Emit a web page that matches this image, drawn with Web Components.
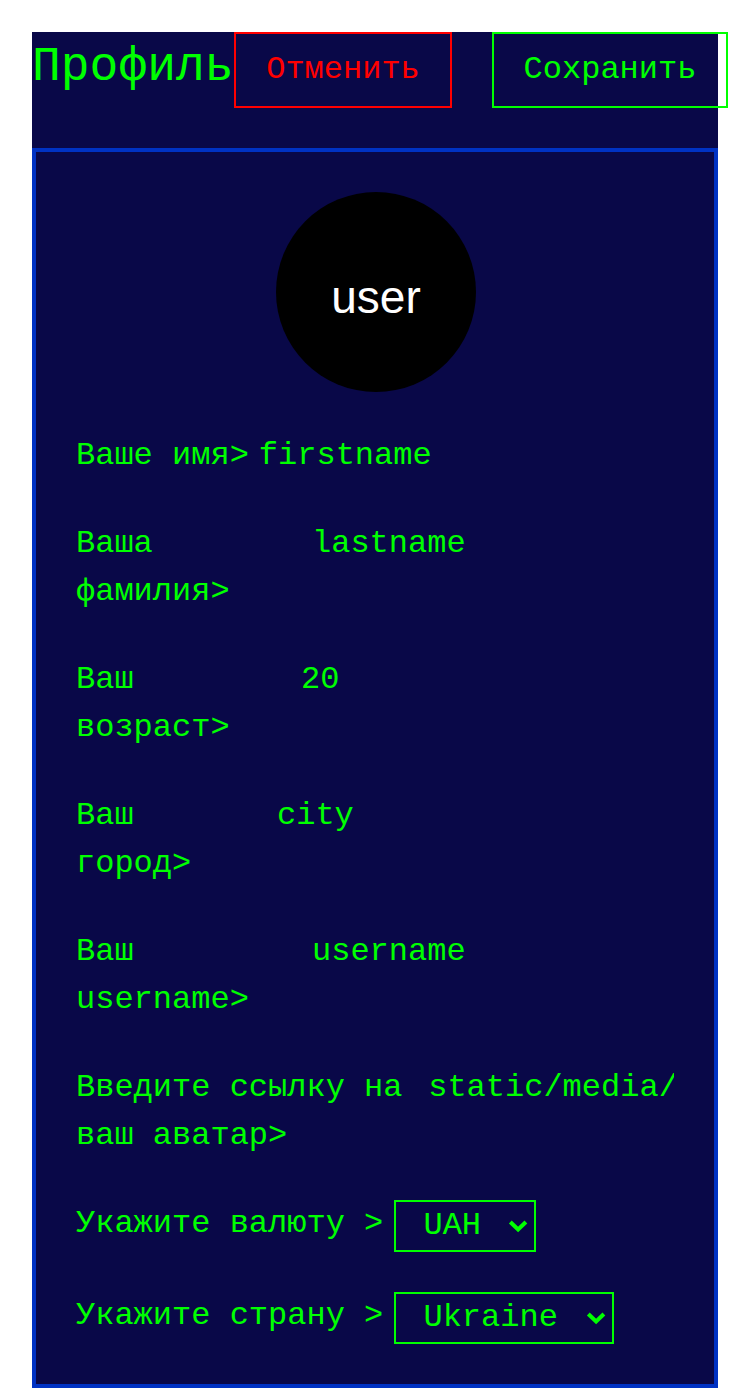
<!DOCTYPE html>
<html lang="ru">
<head>
<meta charset="utf-8">
<title>Профиль</title>
<style>
html, body { margin: 0; background: #fff; }
body { height: 1388px; overflow: hidden; }
</style>
</head>
<body>
<profile-page></profile-page>
<script>
const define = (name, html) => customElements.define(name, class extends HTMLElement {
  constructor() {
    super();
    const t = document.createElement('template');
    t.innerHTML = html;
    this.attachShadow({ mode: 'open' }).append(t.content.cloneNode(true));
  }
});

define('action-button', `
<style>
:host { display: block; flex: none; width: var(--width); color: var(--tone, #0f0); }
button { display: block; box-sizing: border-box; width: 100%; height: 76px; margin: 0; padding: 0; border: 2px solid currentColor; background: none; color: inherit; font: inherit; line-height: 72px; white-space: nowrap; }
</style>
<button><slot></slot></button>`);

define('user-avatar', `
<style>
:host { display: block; width: 200px; height: 200px; border-radius: 50%; background: #000; color: #fff; text-align: center; font: 46px/210px "Liberation Sans", Arial, sans-serif; overflow: hidden; }
</style>
<slot></slot>`);

define('profile-field', `
<style>
:host { display: flex; align-items: flex-start; }
.label { flex: none; width: var(--label, auto); margin-right: 10px; }
.value { flex: 1; min-width: 0; overflow: hidden; white-space: nowrap; }
</style>
<div class="label"><slot name="label"></slot></div>
<div class="value"><slot></slot></div>`);

define('select-box', `
<style>
:host { display: flex; align-items: center; box-sizing: border-box; width: var(--width); height: 52px; margin-left: .8px; padding: 0 6px 0 27.4px; border: 2px solid #0f0; justify-content: space-between; }
svg { display: block; flex: none; }
</style>
<span><slot></slot></span>
<svg width="20" height="14" viewBox="0 0 20 14"><path d="M2.3 3 10.1 10.5 17.9 3" fill="none" stroke="#0f0" stroke-width="4"/></svg>`);

define('profile-page', `
<style>
:host { display: block; box-sizing: border-box; width: 686px; height: 1356px; margin: 32px 0 0 32px; background: #090848; color: #0f0; font: 32px/48px "Liberation Mono", "Courier New", monospace; }
header { display: flex; align-items: flex-start; height: 116px; }
h1 { flex: none; width: 202px; margin: 0; font: 48px/70px "Liberation Mono", "Courier New", monospace; }
.actions { display: flex; flex: none; gap: 40px; }
.cancel { --tone: #f00; --width: 218px; }
.save { --width: 236px; }
main { display: flex; flex-direction: column; gap: 40px; box-sizing: border-box; height: 1240px; padding: 40px; border: 4px solid #0032c3; }
user-avatar { align-self: center; margin-left: 2px; }
</style>
<header>
<h1>Профиль</h1>
<div class="actions"><action-button class="cancel">Отменить</action-button><action-button class="save">Сохранить</action-button></div>
</header>
<main>
<user-avatar>user</user-avatar>
<profile-field><span slot="label">Ваше имя&gt;</span>firstname</profile-field>
<profile-field style="--label:226px"><span slot="label">Ваша<br>фамилия&gt;</span>lastname</profile-field>
<profile-field style="--label:215px"><span slot="label">Ваш<br>возраст&gt;</span>20</profile-field>
<profile-field style="--label:191px"><span slot="label">Ваш<br>город&gt;</span>city</profile-field>
<profile-field style="--label:226px"><span slot="label">Ваш<br>username&gt;</span>username</profile-field>
<profile-field style="--label:342.2px"><span slot="label">Введите ссылку на<br>ваш аватар&gt;</span>static/media/</profile-field>
<profile-field><span slot="label">Укажите валюту &gt;</span><select-box style="--width:142px">UAH</select-box></profile-field>
<profile-field><span slot="label">Укажите страну &gt;</span><select-box style="--width:220px">Ukraine</select-box></profile-field>
</main>`);
</script>
</body>
</html>
